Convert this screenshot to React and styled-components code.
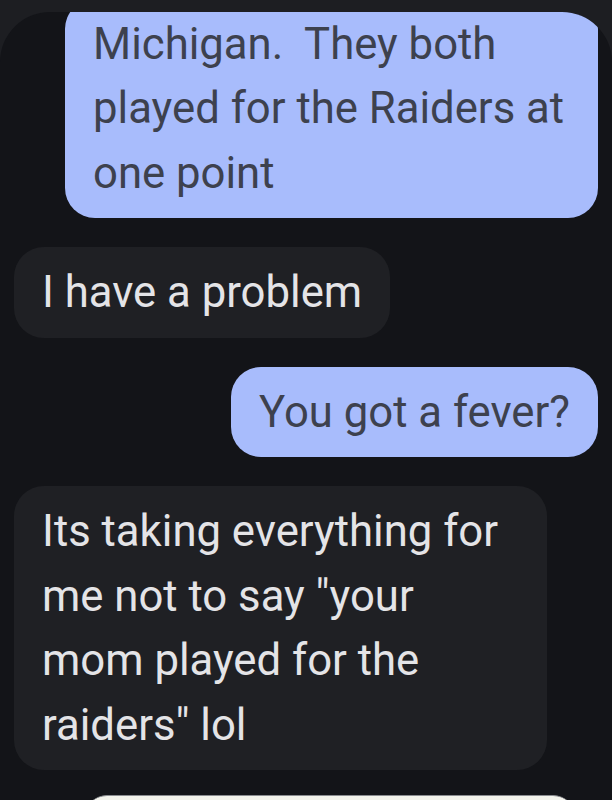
import React from "react";
import styled, { createGlobalStyle } from "styled-components";

const GlobalStyle = createGlobalStyle`
  html, body {
    margin: 0;
    padding: 0;
    background: #1d1e22;
  }
  body {
    font-family: Roboto, "Noto Sans", "Liberation Sans", sans-serif;
  }
`;

const messages = [
  { id: 1, mine: true, text: "Michigan.  They both played for the Raiders at one point" },
  { id: 2, mine: false, text: "I have a problem" },
  { id: 3, mine: true, text: "You got a fever?" },
  {
    id: 4,
    mine: false,
    text: 'Its taking everything for me not to say "your mom played for the raiders" lol',
  },
];

const App = () => {
  return (
    <>
      <GlobalStyle />
      <Screen>
        <Panel>
          <Thread>
            {messages.map((m) => (
              <Bubble key={m.id} $mine={m.mine}>
                {m.text}
              </Bubble>
            ))}
            <Attachment />
          </Thread>
        </Panel>
      </Screen>
    </>
  );
};

const Screen = styled.div`
  width: 612px;
  height: 800px;
  padding-top: 12px;
  box-sizing: border-box;
  background: #1d1e22;
  overflow: hidden;
`;

const Panel = styled.div`
  height: 788px;
  background: #131418;
  border-radius: 50px 50px 0 0;
  overflow: hidden;
`;

const Thread = styled.div`
  display: flex;
  flex-direction: column;
  gap: 29px;
  padding: 0 14px;
  /* scrolled: first bubble sits partly above the view */
  margin-top: -13.5px;
`;

const Bubble = styled.div`
  align-self: ${(p) => (p.$mine ? "flex-end" : "flex-start")};
  max-width: 533px;
  box-sizing: border-box;
  padding: 13px 28px;
  border-radius: 30px;
  background: ${(p) => (p.$mine ? "#a8bcfc" : "#1f2024")};
  color: ${(p) => (p.$mine ? "#3d414e" : "#e4e4e7")};
  font-size: 43.7px;
  line-height: 64.5px;
  white-space: pre-wrap;
  -webkit-font-smoothing: antialiased;
`;

const Attachment = styled.div`
  align-self: flex-end;
  margin: -4px 23px 0 0;
  width: 490px;
  height: 120px;
  flex-shrink: 0;
  border-radius: 22px;
  background: #f3f3ec;
  border-top: 1px solid #8a8c90;
`;

export default App;
